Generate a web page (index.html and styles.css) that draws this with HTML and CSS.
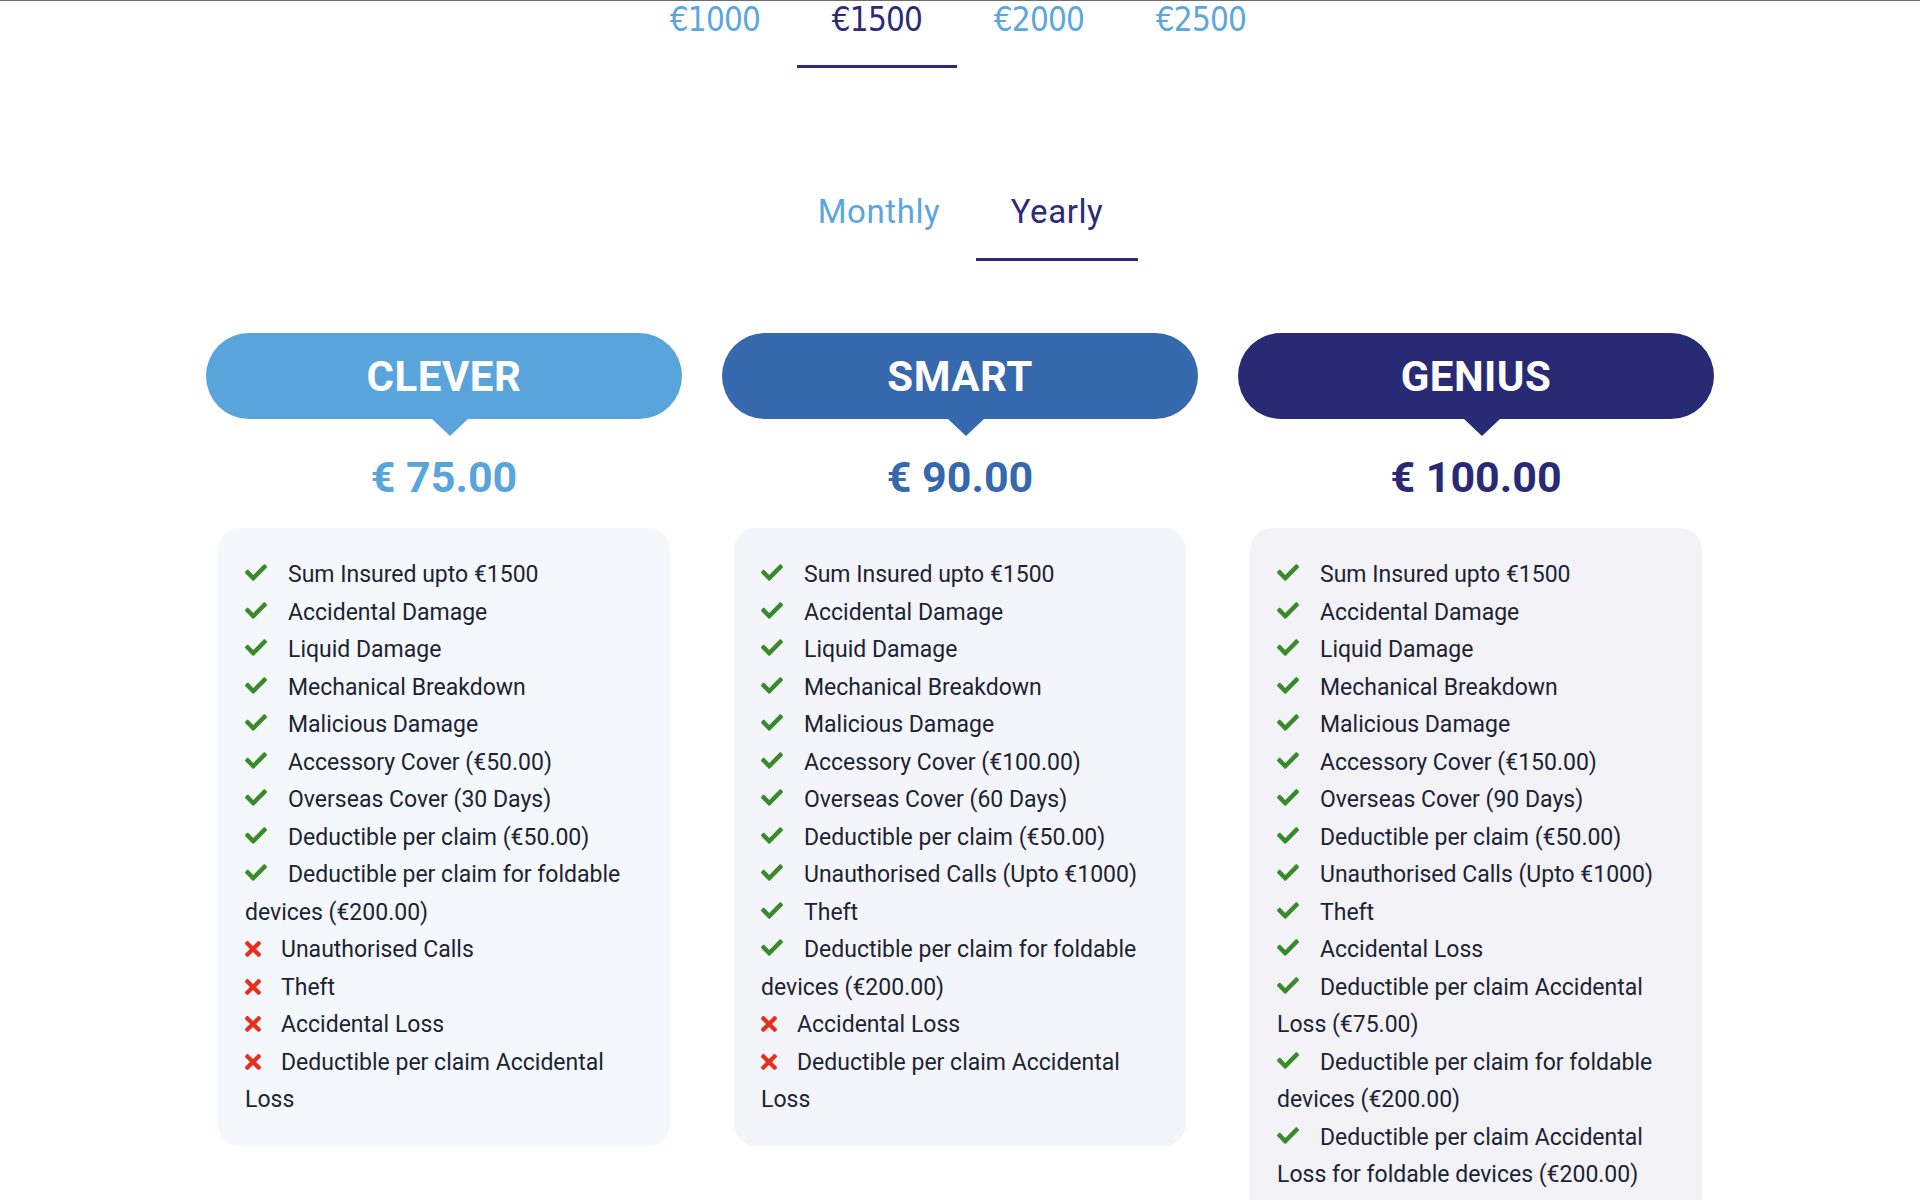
FILE: index.html
```html
<!DOCTYPE html>
<html lang="en">
<head>
<meta charset="utf-8">
<title>Plans</title>
<link rel="stylesheet" href="styles.css">
</head>
<body>
<svg class="defs" aria-hidden="true">
  <symbol id="chk" viewBox="0 64 512 384"><path d="M173.898 439.404l-166.4-166.4c-9.997-9.997-9.997-26.206 0-36.204l36.203-36.204c9.997-9.998 26.207-9.998 36.204 0L192 312.69 432.095 72.596c9.997-9.997 26.207-9.997 36.204 0l36.203 36.204c9.997 9.997 9.997 26.206 0 36.204l-294.4 294.401c-9.998 9.997-26.207 9.997-36.204-.001z"/></symbol>
  <symbol id="crs" viewBox="0 80 352 352"><path d="M242.72 256l100.07-100.07c12.28-12.28 12.28-32.19 0-44.48l-22.24-22.24c-12.28-12.28-32.19-12.28-44.48 0L176 189.28 75.93 89.21c-12.28-12.28-32.19-12.28-44.480 0L9.21 111.45c-12.28 12.28-12.28 32.19 0 44.48L109.28 256 9.21 356.07c-12.28 12.28-12.28 32.19 0 44.48l22.24 22.240c12.28 12.28 32.2 12.28 44.48 0L176 322.72l100.07 100.07c12.28 12.28 32.2 12.28 44.48 0l22.24-22.24c12.28-12.28 12.28-32.19 0-44.48L242.72 256z"/></symbol>
</svg>

<nav class="amounts">
  <span class="amount">€1000</span>
  <span class="amount active">€1500</span>
  <span class="amount">€2000</span>
  <span class="amount">€2500</span>
</nav>

<div class="period">
  <span class="period-tab">Monthly</span>
  <span class="period-tab active">Yearly</span>
</div>

<section class="plans">
  <article class="plan plan-clever">
    <div class="pill">CLEVER</div>
    <div class="price">€ 75.00</div>
    <ul class="features">
      <li><svg class="ic yes"><use href="#chk"/></svg>Sum Insured upto €1500</li>
      <li><svg class="ic yes"><use href="#chk"/></svg>Accidental Damage</li>
      <li><svg class="ic yes"><use href="#chk"/></svg>Liquid Damage</li>
      <li><svg class="ic yes"><use href="#chk"/></svg>Mechanical Breakdown</li>
      <li><svg class="ic yes"><use href="#chk"/></svg>Malicious Damage</li>
      <li><svg class="ic yes"><use href="#chk"/></svg>Accessory Cover (€50.00)</li>
      <li><svg class="ic yes"><use href="#chk"/></svg>Overseas Cover (30 Days)</li>
      <li><svg class="ic yes"><use href="#chk"/></svg>Deductible per claim (€50.00)</li>
      <li><svg class="ic yes"><use href="#chk"/></svg>Deductible per claim for foldable devices (€200.00)</li>
      <li><svg class="ic no"><use href="#crs"/></svg>Unauthorised Calls</li>
      <li><svg class="ic no"><use href="#crs"/></svg>Theft</li>
      <li><svg class="ic no"><use href="#crs"/></svg>Accidental Loss</li>
      <li><svg class="ic no"><use href="#crs"/></svg>Deductible per claim Accidental Loss</li>
    </ul>
  </article>

  <article class="plan plan-smart">
    <div class="pill">SMART</div>
    <div class="price">€ 90.00</div>
    <ul class="features">
      <li><svg class="ic yes"><use href="#chk"/></svg>Sum Insured upto €1500</li>
      <li><svg class="ic yes"><use href="#chk"/></svg>Accidental Damage</li>
      <li><svg class="ic yes"><use href="#chk"/></svg>Liquid Damage</li>
      <li><svg class="ic yes"><use href="#chk"/></svg>Mechanical Breakdown</li>
      <li><svg class="ic yes"><use href="#chk"/></svg>Malicious Damage</li>
      <li><svg class="ic yes"><use href="#chk"/></svg>Accessory Cover (€100.00)</li>
      <li><svg class="ic yes"><use href="#chk"/></svg>Overseas Cover (60 Days)</li>
      <li><svg class="ic yes"><use href="#chk"/></svg>Deductible per claim (€50.00)</li>
      <li><svg class="ic yes"><use href="#chk"/></svg>Unauthorised Calls (Upto €1000)</li>
      <li><svg class="ic yes"><use href="#chk"/></svg>Theft</li>
      <li><svg class="ic yes"><use href="#chk"/></svg>Deductible per claim for foldable devices (€200.00)</li>
      <li><svg class="ic no"><use href="#crs"/></svg>Accidental Loss</li>
      <li><svg class="ic no"><use href="#crs"/></svg>Deductible per claim Accidental Loss</li>
    </ul>
  </article>

  <article class="plan plan-genius">
    <div class="pill">GENIUS</div>
    <div class="price">€ 100.00</div>
    <ul class="features">
      <li><svg class="ic yes"><use href="#chk"/></svg>Sum Insured upto €1500</li>
      <li><svg class="ic yes"><use href="#chk"/></svg>Accidental Damage</li>
      <li><svg class="ic yes"><use href="#chk"/></svg>Liquid Damage</li>
      <li><svg class="ic yes"><use href="#chk"/></svg>Mechanical Breakdown</li>
      <li><svg class="ic yes"><use href="#chk"/></svg>Malicious Damage</li>
      <li><svg class="ic yes"><use href="#chk"/></svg>Accessory Cover (€150.00)</li>
      <li><svg class="ic yes"><use href="#chk"/></svg>Overseas Cover (90 Days)</li>
      <li><svg class="ic yes"><use href="#chk"/></svg>Deductible per claim (€50.00)</li>
      <li><svg class="ic yes"><use href="#chk"/></svg>Unauthorised Calls (Upto €1000)</li>
      <li><svg class="ic yes"><use href="#chk"/></svg>Theft</li>
      <li><svg class="ic yes"><use href="#chk"/></svg>Accidental Loss</li>
      <li><svg class="ic yes"><use href="#chk"/></svg>Deductible per claim Accidental Loss (€75.00)</li>
      <li><svg class="ic yes"><use href="#chk"/></svg>Deductible per claim for foldable devices (€200.00)</li>
      <li><svg class="ic yes"><use href="#chk"/></svg>Deductible per claim Accidental Loss for foldable devices (€200.00)</li>
    </ul>
  </article>
</section>
</body>
</html>
```

FILE: styles.css
```css
* { box-sizing: border-box; }

html, body { background: #ffffff; }

body {
  margin: 0;
  border-top: 1px solid #6e6e6e;
  font-family: Roboto, "Noto Sans", Arial, sans-serif;
  color: #1c2433;
}

.defs { display: none; }

/* sum insured tabs */
.amounts {
  display: flex;
  justify-content: center;
  padding-right: 4px;
}

.amount {
  width: 160px;
  margin: 0 1px;
  text-align: center;
  font-family: "DejaVu Sans Condensed", Roboto, sans-serif;
  font-size: 33px;
  letter-spacing: -0.8px;
  line-height: 38px;
  padding-bottom: 26px;
  border-bottom: 3px solid transparent;
  color: #5ba6de;
}

.amount.active {
  color: #2b2b7a;
  border-bottom-color: #2b2b7a;
}

/* billing period tabs */
.period {
  display: flex;
  justify-content: center;
  gap: 16px;
  padding-left: 16px;
  margin-top: 124px;
}

.period-tab {
  width: 162px;
  text-align: center;
  font-size: 33px;
  line-height: 40px;
  letter-spacing: 0.6px;
  padding-bottom: 26px;
  border-bottom: 3px solid transparent;
  color: #5ba6de;
}

.period-tab.active {
  color: #2b2b7a;
  border-bottom-color: #2b2b7a;
}

/* plans */
.plans {
  display: grid;
  grid-template-columns: repeat(3, 476px);
  gap: 40px;
  justify-content: center;
  align-items: start;
  margin-top: 72px;
}

.plan-clever { --c: #5aa4dc; --bg: #f4f7fb; }
.plan-smart  { --c: #3568ad; --bg: #f4f5fa; }
.plan-genius { --c: #282a75; --bg: #f2f2f7; }

.pill {
  position: relative;
  height: 86px;
  border-radius: 43px;
  background: var(--c);
  display: flex;
  align-items: center;
  justify-content: center;
  color: #ffffff;
  font-weight: 700;
  font-size: 42px;
  letter-spacing: 0.5px;
}

.pill::after {
  content: "";
  position: absolute;
  top: 100%;
  left: calc(50% + 6px);
  margin-left: -18px;
  border-left: 18px solid transparent;
  border-right: 18px solid transparent;
  border-top: 17px solid var(--c);
}

.price {
  margin-top: 33px;
  text-align: center;
  font-size: 43px;
  font-weight: 700;
  line-height: 50px;
  color: var(--c);
}

.features {
  list-style: none;
  margin: 26px 12px 0;
  padding: 28px 27px 27px;
  background: var(--bg);
  border-radius: 22px;
}

.features li {
  font-size: 23px;
  line-height: 37.5px;
  color: #1c2433;
}

.ic {
  display: inline-block;
}

.ic.yes {
  width: 22px;
  height: 17px;
  margin-right: 21px;
  vertical-align: 1px;
  fill: #3a8a2b;
}

.ic.no {
  width: 16px;
  height: 16px;
  margin-right: 20px;
  vertical-align: 0;
  fill: #e5301f;
}
```
